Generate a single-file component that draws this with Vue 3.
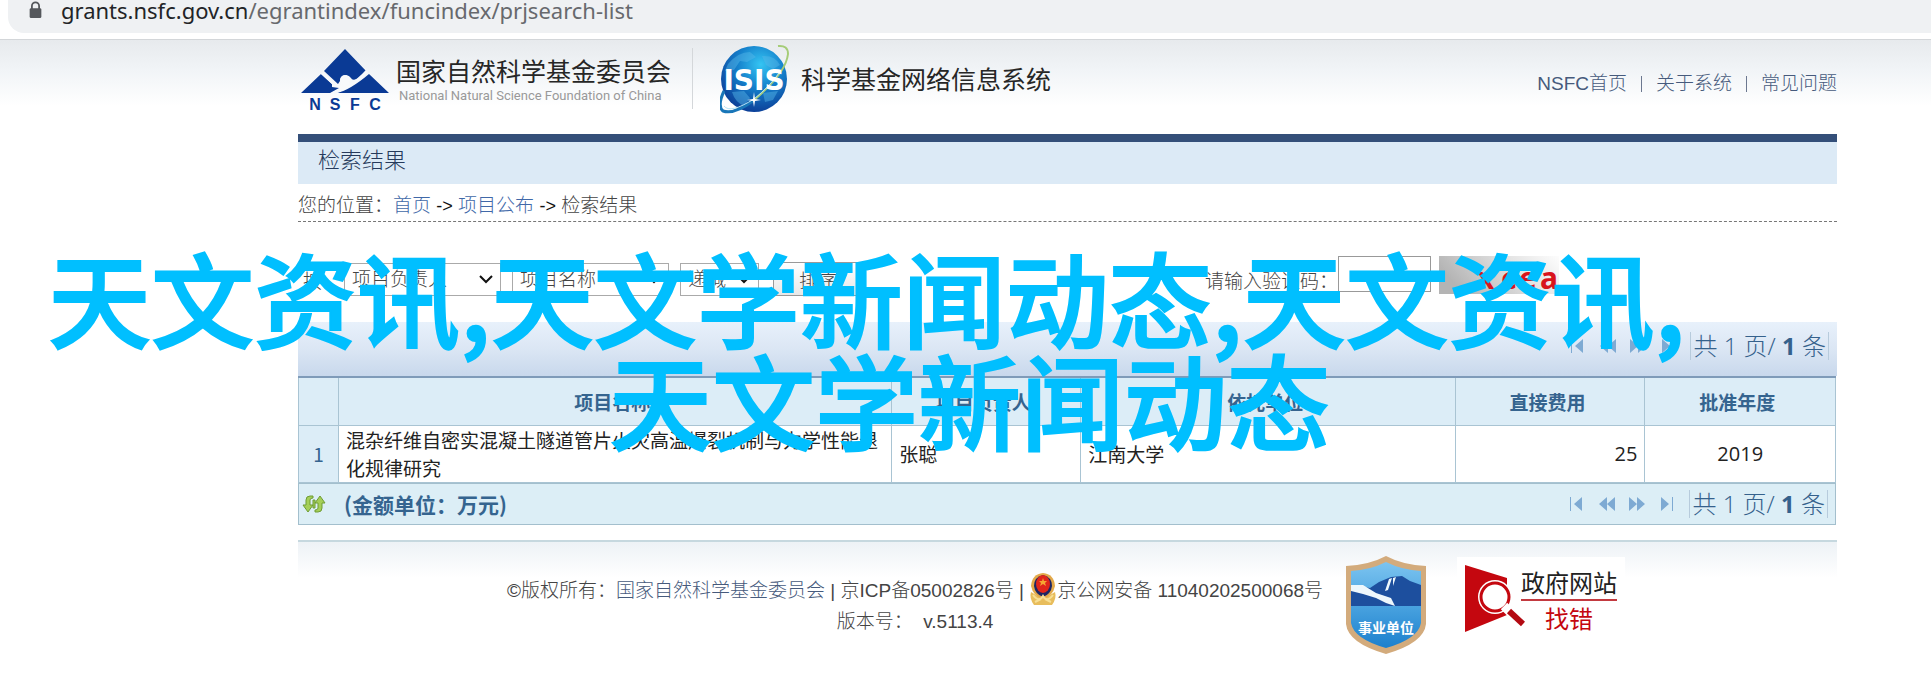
<template>
  <div class="page">
    <div class="address-bar">
      <svg class="lock" viewBox="0 0 14 20" aria-hidden="true">
        <path d="M3 9V5.500a4 4 0 0 1 8 0V9" fill="none" stroke="#55585c" stroke-width="2" />
        <rect x="0.500" y="8" width="13" height="11" rx="1.500" fill="#55585c" />
      </svg>
      <span class="host">grants.nsfc.gov.cn</span><span class="path">/egrantindex/funcindex/prjsearch-list</span>
    </div>

    <header class="site-header">
      <div class="wrap header-inner">
        <svg class="nsfc-logo" viewBox="0 0 90 62" role="img" aria-label="NSFC">
          <path d="M45 0 67 23 57 30Q52 32 51 29A6 6 0 0 0 40 32L38 35 24 22Z" fill="#0a3a95" />
          <path d="M21 25 32 35 32 38 39 39 30 44H1Z" fill="#0a3a95" />
          <path d="M69 25 89 44H37Q50 41 69 25Z" fill="#0a3a95" />
          <circle cx="45" cy="31" r="5" fill="#f7f9fb" />
          <path d="M22 24 35 36M67 22Q59 31 50 36L34 44" stroke="#f7f9fb" stroke-width="3" fill="none" />
          <text
            v-for="(letter, i) in 'NSFC'"
            :key="letter"
            :x="15 + i * 20"
            y="61"
            text-anchor="middle"
            class="nsfc-letter"
          >{{ letter }}</text>
        </svg>
        <div class="org">
          <div class="org-cn">国家自然科学基金委员会</div>
          <div class="org-en">National Natural Science Foundation of China</div>
        </div>
        <div class="divider"></div>
        <svg class="isis-logo" viewBox="0 0 70 70" role="img" aria-label="ISIS">
          <defs>
            <radialGradient id="globe" cx="0.600" cy="0.280" r="0.750">
              <stop offset="0" stop-color="#35c5f3" />
              <stop offset="0.450" stop-color="#1683cd" />
              <stop offset="1" stop-color="#0b3c96" />
            </radialGradient>
          </defs>
          <circle cx="34" cy="35" r="33" fill="url(#globe)" />
          <path d="M8 20Q18 8 30 8L36 13 27 18 20 17 14 26 5 27ZM42 12Q55 11 60 21L53 25 46 21ZM12 48 24 47 30 54 24 62Q15 58 12 48ZM43 49 58 47 53 56 45 58Z" fill="#58b9e8" opacity="0.450" />
          <path d="M4 47Q-3 62 3 67Q14 71 34 56" fill="none" stroke="#1976b8" stroke-width="3" />
          <path d="M34 56Q66 29 68 10Q68 1 58 2" fill="none" stroke="#a5cc78" stroke-width="2" />
          <path d="M4 62Q10 70 34 55Q50 42 59 29" fill="none" stroke="#b7e3f4" stroke-width="1" />
          <text x="34" y="46" text-anchor="middle" class="isis-text">ISIS</text>
          <path d="M34 48 35 55 41 56 35 57 34 63 33 57 27 56 33 55Z" fill="#fff" />
        </svg>
        <div class="system-name">科学基金网络信息系统</div>
        <nav class="top-nav">
          <template v-for="(item, i) in navItems" :key="item">
            <span v-if="i" class="nav-sep"></span>
            <a href="#">{{ item }}</a>
          </template>
        </nav>
      </div>
    </header>

    <main class="wrap">
      <h1 class="section-title">检索结果</h1>
      <div class="breadcrumb">
        您的位置：<a href="#">首页</a> <b>-&gt;</b> <a href="#">项目公布</a> <b>-&gt;</b> 检索结果
      </div>

      <form class="sort-form" @submit.prevent>
        <label class="sort-label" for="sort0">按</label>
        <div v-for="(s, i) in selects" :key="i" class="select-box" :class="s.size">
          <select :id="'sort' + i" v-model="s.value" :aria-label="s.value">
            <option>{{ s.value }}</option>
          </select>
          <svg class="chevron" viewBox="0 0 14 10" aria-hidden="true">
            <path d="M1 2 7 8 13 2" fill="none" stroke="#111" stroke-width="2" />
          </svg>
        </div>
        <button class="sort-btn" type="submit">排序</button>
        <label class="code-label" for="code">请输入验证码：</label>
        <input id="code" v-model="code" class="code-input" type="text" />
        <svg class="captcha" viewBox="0 0 120 38" aria-hidden="true">
          <defs>
            <linearGradient id="noise" x1="0" x2="1" y1="0.300" y2="0">
              <stop offset="0" stop-color="#b4b4b4" />
              <stop offset="0.600" stop-color="#e4e4e4" />
              <stop offset="1" stop-color="#fdfdfd" />
            </linearGradient>
          </defs>
          <rect width="120" height="38" fill="url(#noise)" />
          <text x="38 62 80 101" y="33" class="captcha-text">xcea</text>
        </svg>
      </form>

      <section class="grid">
        <div class="grid-top">
          <div class="pager">
            <svg v-for="p in pagerIcons" :key="p" class="pager-icon" viewBox="0 0 16 14" aria-hidden="true">
              <path :d="p" />
            </svg>
            <span class="pager-text">共 1 页/ <b>1</b> 条</span>
          </div>
        </div>
        <table class="results">
          <colgroup>
            <col class="c-no" /><col class="c-name" /><col class="c-person" />
            <col class="c-org" /><col class="c-cost" /><col class="c-year" />
          </colgroup>
          <thead>
            <tr>
              <th v-for="h in headers" :key="h">{{ h }}</th>
            </tr>
          </thead>
          <tbody>
            <tr v-for="row in rows" :key="row.no">
              <td class="no">{{ row.no }}</td>
              <td>{{ row.name }}</td>
              <td>{{ row.person }}</td>
              <td>{{ row.org }}</td>
              <td class="num right">{{ row.cost }}</td>
              <td class="num center">{{ row.year }}</td>
            </tr>
          </tbody>
        </table>
        <div class="grid-bottom">
          <svg class="refresh" viewBox="0 0 24 18" aria-hidden="true">
            <path d="M11 1H8Q4 1 4 5V10H1L6 17 11 10H8V5Q8 3 11 3ZM13 17H16Q20 17 20 13V8H23L18 1 13 8H16V13Q16 15 13 15ZM11 5H13V13H11Z" fill="#a5cf58" stroke="#6f9d35" stroke-width="1" />
          </svg>
          <span class="unit">(金额单位：万元)</span>
          <div class="pager">
            <svg v-for="p in pagerIcons" :key="p" class="pager-icon" viewBox="0 0 16 14" aria-hidden="true">
              <path :d="p" />
            </svg>
            <span class="pager-text">共 1 页/ <b>1</b> 条</span>
          </div>
        </div>
      </section>
    </main>

    <footer class="wrap site-footer">
      <div class="copyright">
        <div class="copy-line">
          ©版权所有：<a href="#">国家自然科学基金委员会</a>&nbsp;|&nbsp;京ICP备05002826号&nbsp;|&nbsp;<svg class="police" viewBox="0 0 28 34" aria-hidden="true">
            <path d="M2 20Q0 26 5 33H23Q28 26 26 20L14 27Z" fill="#e8bd5c" />
            <path d="M14 1Q25 2 26 14Q24 24 14 27Q4 24 2 14Q3 2 14 1Z" fill="#e3a94a" />
            <path d="M14 3Q23 5 23 14Q22 22 14 25Q6 22 5 14Q5 5 14 3Z" fill="#1c2564" />
            <ellipse cx="14" cy="12" rx="7" ry="9" fill="#e0251b" />
            <path d="M14 6 15 9H18L16 11 17 14 14 12 11 14 12 11 10 9H13Z" fill="#f6a632" />
            <path d="M4 23Q10 31 14 24Q18 31 24 23M6 30 12 27M22 30 16 27" fill="none" stroke="#f7df95" stroke-width="2" />
          </svg>京公网安备 11040202500068号
        </div>
        <div class="copy-line">版本号：&nbsp; v.5113.4</div>
      </div>
      <svg class="shield" viewBox="0 0 82 98" role="img" aria-label="事业单位">
        <defs>
          <linearGradient id="sky" x1="0" x2="0" y1="0" y2="1">
            <stop offset="0" stop-color="#7cc4f0" />
            <stop offset="0.500" stop-color="#4aa3e0" />
            <stop offset="1" stop-color="#1c80cd" />
          </linearGradient>
        </defs>
        <path d="M41 0Q58 9 81 10V68Q79 87 41 98Q3 87 1 68V10Q24 9 41 0Z" fill="#d3ab7c" />
        <path d="M41 6Q57 14 76 15V67Q73 83 41 92Q9 83 6 67V15Q25 14 41 6Z" fill="url(#sky)" />
        <path d="M6 50V29L25 32 34 26 46 21 57 20 65 25 76 29V50Z" fill="#1d4f9e" />
        <path d="M6 29 18 29 31 37 46 42 50 50 41 47 31 42 18 38 6 35ZM44 23 47 22 43 34 40 35ZM48 22 51 21 48 30Z" fill="#eef7fc" />
        <text x="41" y="77" text-anchor="middle" class="shield-text">事业单位</text>
      </svg>
      <div class="find-error">
        <svg class="magnifier" viewBox="0 0 60 67" aria-hidden="true">
          <path d="M0 0 42 13V50L0 67Z" fill="#c4070f" />
          <circle cx="30" cy="32" r="17" fill="#fff" />
          <circle cx="30" cy="32" r="14" fill="#fff" stroke="#c4070f" stroke-width="3" />
          <path d="M39 41 58 60" stroke="#fff" stroke-width="9" />
          <path d="M44 46 58 59" stroke="#b30a12" stroke-width="6" />
        </svg>
        <div class="find-text">
          <span>政府网站</span>
          <span class="find-red">找错</span>
        </div>
      </div>
    </footer>

    <div class="overlay">
      <div>天文资讯,天文学新闻动态,天文资讯,</div>
      <div class="overlay-second">天文学新闻动态</div>
    </div>
  </div>
</template>

<script setup>
import { ref } from 'vue'

const navItems = ['NSFC首页', '关于系统', '常见问题']

const selects = ref([
  { value: '项目负责人', size: 'wide' },
  { value: '项目名称', size: 'wide' },
  { value: '递减', size: 'narrow' },
])
const code = ref('')

const headers = ['', '项目名称', '项目负责人', '依托单位', '直接费用', '批准年度']
const rows = [
  {
    no: 1,
    name: '混杂纤维自密实混凝土隧道管片火灾高温爆裂机制与力学性能退化规律研究',
    person: '张聪',
    org: '江南大学',
    cost: 25,
    year: 2019,
  },
]

// first, previous, next, last
const pagerIcons = [
  'M1 0H2V14H1ZM13 0V14L5 7Z',
  'M8 0V14L0 7ZM16 0V14L8 7Z',
  'M0 0V14L8 7ZM8 0V14L16 7Z',
  'M2 0V14L10 7ZM13 0H14V14H13Z',
]
</script>

<style>
body {
  margin: 0;
  background: #fff;
}
</style>

<style scoped>
.page {
  position: relative;
  padding-bottom: 24px;
  font-family: "Liberation Sans", "Noto Sans CJK SC", sans-serif;
  font-size: 19px;
  color: #444;
  overflow: hidden;
}

a {
  color: #465a7c;
  text-decoration: none;
}

.wrap {
  margin: 0 94px 0 298px;
}

.address-bar {
  display: flex;
  height: 33px;
  margin: 0 0 6px 8px;
  padding-left: 21px;
  border-bottom-left-radius: 16px;
  background: #eff1f3;
  font-family: "Noto Sans", sans-serif;
  font-size: 22px;
  line-height: 20px;
}

.lock {
  width: 13px;
  height: 18px;
  margin: 1px 19px 0 0;
}

.host {
  color: #222427;
}

.path {
  color: #67696d;
}

.site-header {
  border-top: 1px solid #d3d6d9;
  background: linear-gradient(#e7eaed, #f1f4f7 30px, #fff 66px);
}

.header-inner {
  display: flex;
  align-items: flex-start;
  height: 94px;
}

.nsfc-logo {
  width: 90px;
  height: 62px;
  margin: 9px 6px 0 2px;
}

.nsfc-letter {
  font: bold 16px "Liberation Sans", sans-serif;
  fill: #0a3a95;
}

.org {
  width: 276px;
  margin-top: 15px;
  white-space: nowrap;
}

.org-cn,
.system-name {
  font-family: "Noto Sans CJK SC", sans-serif;
  font-size: 25px;
  line-height: 30px;
  color: #262626;
}

.org-en {
  padding-left: 3px;
  font-family: Roboto, sans-serif;
  font-size: 13px;
  line-height: 22px;
  color: #999;
}

.divider {
  width: 1px;
  height: 61px;
  margin: 8px 27px 0 20px;
  background: #d4d7da;
}

.isis-logo {
  width: 70px;
  height: 70px;
  margin: 4px 11px 0 0;
}

.isis-text {
  font: bold 28px "DejaVu Sans", sans-serif;
  fill: #fff;
}

.system-name {
  margin-top: 23px;
}

.top-nav {
  display: flex;
  align-items: center;
  margin: 30px 0 0 auto;
  line-height: 28px;
  font-weight: 300;
}

.nav-sep {
  width: 1px;
  height: 16px;
  margin: 0 14px;
  background: #6c7890;
}

.section-title {
  height: 42px;
  margin: 0;
  padding-left: 20px;
  border-top: 8px solid #344f79;
  background: #dceaf6;
  font-size: 22px;
  font-weight: 300;
  line-height: 38px;
  color: #263a5c;
}

.breadcrumb {
  height: 37px;
  border-bottom: 1px dashed #777;
  font-weight: 300;
  line-height: 44px;
}

.breadcrumb a {
  color: #4068a8;
}

.breadcrumb b {
  font-size: 18px;
  font-weight: 500;
  color: #111;
}

.sort-form {
  display: flex;
  align-items: center;
  height: 46px;
  padding: 34px 0 20px 5px;
  font-weight: 300;
}

.sort-label {
  width: 41px;
}

.select-box {
  display: grid;
  align-items: center;
  margin-right: 11px;
}

.select-box.wide {
  width: 157px;
}

.select-box.narrow {
  width: 79px;
}

.select-box select {
  grid-area: 1 / 1;
  height: 33px;
  padding: 0 0 0 7px;
  border: 1px solid #aaa;
  background: #fff;
  appearance: none;
  font: inherit;
  color: #444;
}

.chevron {
  grid-area: 1 / 1;
  justify-self: end;
  width: 14px;
  height: 10px;
  margin-right: 8px;
  pointer-events: none;
}

.sort-btn {
  width: 90px;
  height: 34px;
  margin-left: 3px;
  padding: 0;
  border: 1px solid #999;
  background: linear-gradient(#fff, #e8e8e8);
  font: inherit;
  color: #444;
}

.code-label {
  margin-left: auto;
}

.code-input {
  align-self: flex-start;
  box-sizing: border-box;
  width: 93px;
  height: 36px;
  margin-right: 8px;
  border: 1px solid #999;
}

.captcha {
  align-self: flex-start;
  width: 120px;
  height: 38px;
  margin-right: 278px;
}

.captcha-text {
  font: bold 30px "Noto Sans", sans-serif;
  fill: #d8141c;
}

.grid-top {
  display: flex;
  align-items: center;
  height: 54px;
  padding: 0 8px 6px 0;
  box-sizing: border-box;
  background: linear-gradient(#e8f1fb, #dbe6f4 50%, #c8d8ec);
}

.pager {
  display: flex;
  align-items: center;
  margin-left: auto;
  font-size: 24px;
  line-height: 28px;
  color: #35618c;
}

.pager-icon {
  width: 16px;
  height: 14px;
  margin-right: 14px;
  fill: #7eaad3;
}

.pager-text {
  padding: 0 2px;
  border: solid #b7cbdc;
  border-width: 0 1px;
  font-family: "Open Sans", "Noto Sans CJK SC", sans-serif;
  font-weight: 300;
  white-space: nowrap;
}

.pager-text b {
  font-weight: 700;
}

.results {
  width: calc(100% - 1px);
  border-collapse: collapse;
  border-top: 2px solid #7f9bb9;
  table-layout: fixed;
  font-family: "Noto Sans CJK SC", sans-serif;
  color: #222;
}

.c-no {
  width: 40px;
}

.c-name {
  width: 36%;
}

.c-person,
.c-cost {
  width: 12.300%;
}

.c-year {
  width: 12.400%;
}

.results th,
.results td {
  border: 1px solid #a9c4d3;
}

.results thead th {
  border-top: 2px solid #7f9bb9;
}

.results th {
  height: 47px;
  padding: 0 6px 0 0;
  background: #dcedf7;
  font-weight: 700;
  color: #35648f;
}

.results td {
  height: 56px;
  padding: 0 7px;
  line-height: 28px;
}

.results .no {
  padding: 0;
  background: #dcedf7;
  text-align: center;
  color: #35648f;
}

.results .num {
  font-family: "Open Sans", sans-serif;
  font-size: 20px;
}

.results .right {
  text-align: right;
}

.results .center {
  text-align: center;
}

.grid-bottom {
  display: flex;
  align-items: center;
  height: 42px;
  margin-right: 1px;
  padding: 0 7px 0 3px;
  border: 1px solid #a3bfcd;
  box-sizing: border-box;
  background: #dceef6;
}

.refresh {
  width: 24px;
  height: 18px;
  margin-right: 18px;
}

.unit {
  font-family: "Noto Sans CJK SC", sans-serif;
  font-size: 21px;
  font-weight: 700;
  line-height: 28px;
  color: #35648f;
}

.site-footer {
  display: flex;
  align-items: flex-start;
  margin-top: 15px;
  padding-left: 209px;
  border-top: 2px solid #c6d8df;
  background: linear-gradient(#edf2f6, #fff 36px);
}

.copyright {
  margin-top: 31px;
  text-align: center;
  font-weight: 300;
  white-space: nowrap;
}

.copy-line {
  display: flex;
  align-items: center;
  justify-content: center;
  height: 31px;
}

.police {
  width: 28px;
  height: 34px;
}

.shield {
  width: 82px;
  height: 98px;
  margin: 14px 0 0 22px;
}

.shield-text {
  font: bold 14px "Noto Sans CJK SC", sans-serif;
  fill: #fff;
}

.find-error {
  display: flex;
  margin: 15px 0 0 30px;
  padding: 8px;
  background: #fff;
}

.magnifier {
  width: 60px;
  height: 67px;
}

.find-text {
  display: flex;
  flex-direction: column;
  margin-left: -4px;
  font-family: "Noto Sans CJK SC", sans-serif;
  font-size: 24px;
  line-height: 34px;
  text-align: center;
  color: #222;
}

.find-red {
  border-top: 2px solid #c33a40;
  color: #c4070f;
}

.overlay {
  position: absolute;
  top: 246px;
  left: 48px;
  right: 40px;
  font-family: "Noto Sans CJK SC", sans-serif;
  font-size: 103px;
  font-weight: 500;
  line-height: 102px;
  white-space: nowrap;
  color: #00bfff;
  -webkit-text-stroke: 2px #00bfff;
  pointer-events: none;
}

.overlay-second {
  text-align: center;
}
</style>
